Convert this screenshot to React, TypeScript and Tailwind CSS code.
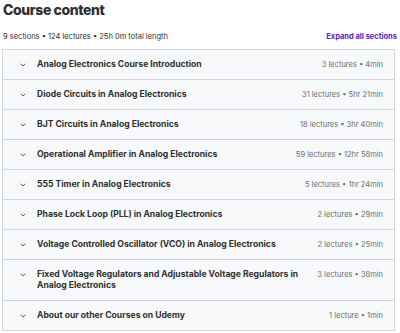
import React from 'react';
import { ChevronDown } from 'lucide-react';

interface Section {
  title: string;
  meta: string;
}

const sections: Section[] = [
  { title: 'Analog Electronics Course Introduction', meta: '3 lectures • 4min' },
  { title: 'Diode Circuits in Analog Electronics', meta: '31 lectures • 5hr 21min' },
  { title: 'BJT Circuits in Analog Electronics', meta: '18 lectures • 3hr 40min' },
  { title: 'Operational Amplifier in Analog Electronics', meta: '59 lectures • 12hr 58min' },
  { title: '555 Timer in Analog Electronics', meta: '5 lectures • 1hr 24min' },
  { title: 'Phase Lock Loop (PLL) in Analog Electronics', meta: '2 lectures • 29min' },
  { title: 'Voltage Controlled Oscillator (VCO) in Analog Electronics', meta: '2 lectures • 25min' },
  {
    title: 'Fixed Voltage Regulators and Adjustable Voltage Regulators in Analog Electronics',
    meta: '3 lectures • 38min',
  },
  { title: 'About our other Courses on Udemy', meta: '1 lecture • 1min' },
];

const App: React.FC = () => {
  return (
    <div
      className="w-[400px] h-[333px] bg-white overflow-hidden text-[#2d2f31]"
      style={{ fontFamily: 'Inter, "Noto Sans", sans-serif' }}
    >
      {/* Header */}
      <h1 className="px-[3px] pt-[1px] text-[14px] leading-[18px] font-extrabold tracking-[-0.4px]">
        Course content
      </h1>
      <div className="flex items-end justify-between pl-[3px] pr-[3px] mt-[12px] mb-[6px]">
        <span className="text-[7.5px] leading-[12px] text-[#2d2f31]">
          9 sections • 124 lectures • 25h 0m total length
        </span>
        <button className="text-[7.5px] leading-[12px] font-bold text-[#5624d0]">
          Expand all sections
        </button>
      </div>

      {/* Sections */}
      <div className="mx-[2px] w-[393px] border border-[#d1d7dc]">
        {sections.map((s, i) => (
          <div
            key={i}
            className={`flex items-start bg-[#f7f9fa] py-[9px] pl-[16px] pr-[11px] ${
              i < sections.length - 1 ? 'border-b border-[#d1d7dc]' : ''
            }`}
          >
            <ChevronDown className="w-[8px] h-[8px] mt-[2px] text-[#3e4143] shrink-0" strokeWidth={2.5} />
            <span className="ml-[10px] flex-1 pr-[14px] text-[8.6px] leading-[11px] font-bold">
              {s.title}
            </span>
            <span className="shrink-0 text-[7.5px] leading-[11px] text-[#6a6f73]">{s.meta}</span>
          </div>
        ))}
      </div>
    </div>
  );
};

export default App;
